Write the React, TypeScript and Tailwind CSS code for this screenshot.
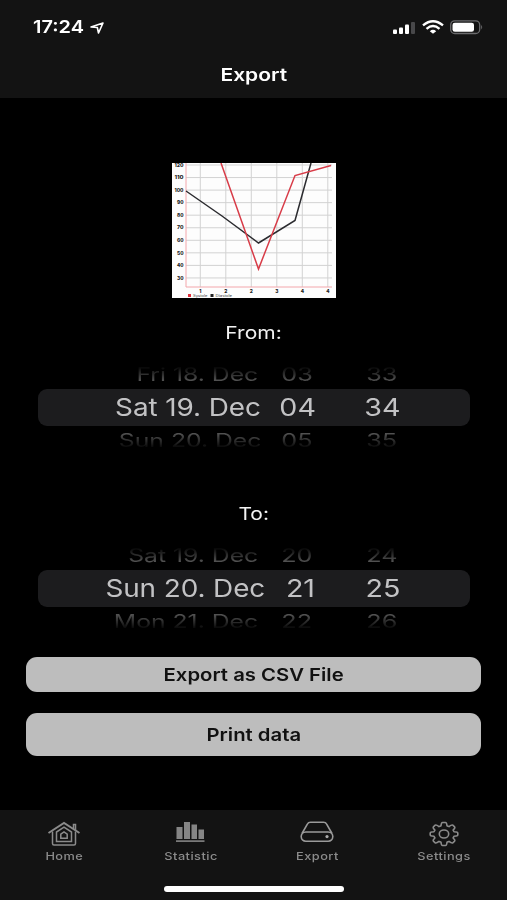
type Row = {
  date: string;
  hour: string;
  minute: string;
};

type WheelProps = {
  label: string;
  before: Row;
  selected: Row;
  after: Row;
  dateWidth: string;
  hourWidth: string;
  afterShift: string;
};

const X_LABELS = ["1", "2", "2", "3", "4", "4"];
const Y_LABELS = ["120", "110", "100", "90", "80", "70", "60", "50", "40", "30"];

function StatusIcons() {
  return (
    <svg width="94" height="18" viewBox="0 0 94 18" aria-hidden>
      <g fill="#fff">
        <rect x="2" y="11.5" width="4" height="4.5" rx="1" />
        <rect x="8" y="9.5" width="4" height="6.5" rx="1" />
        <rect x="14" y="6.5" width="4" height="9.5" rx="1" />
        <rect x="20" y="4" width="4" height="12" rx="1" fill="#48484a" />
      </g>
      <g fill="none" stroke="#fff" strokeWidth="2.4">
        <path d="M32 7.3 Q42 -1 52 7.3" />
        <path d="M35.5 10.8 Q42 5.4 48.5 10.8" />
      </g>
      <path d="M38.8 13.2 Q42 10.5 45.2 13.2 L42 15.8 Z" fill="#fff" />
      <rect x="59.7" y="2.9" width="29" height="12.6" rx="4" fill="none" stroke="#6b6b6d" strokeWidth="1.3" />
      <rect x="61.5" y="4.7" width="21.5" height="9" rx="2.3" fill="#fff" />
      <path d="M90.2 7 Q92.2 9.2 90.2 11.4 Z" fill="#6b6b6d" />
    </svg>
  );
}

function Chart() {
  return (
    <svg width="164" height="135" viewBox="0 0 164 135" className="block bg-[#fdfdfd]" aria-hidden>
      <g stroke="#d2d2d2" strokeWidth="1">
        {Y_LABELS.map((label, i) => (
          <path key={label} d={`M14 ${2 + i * 12.55}H160`} />
        ))}
        {X_LABELS.map((_, i) => (
          <path key={i} d={`M${28.3 + i * 25.5} 0V124`} />
        ))}
      </g>
      <path d="M14 0V124H160" fill="none" stroke="#f3a6ab" strokeWidth="1" />
      <g fill="#222" fontSize="4.8" fontWeight="800" fontFamily="Inter, sans-serif">
        {Y_LABELS.map((label, i) => (
          <text
            key={label}
            x="11.5"
            y={3.7 + i * 12.55}
            textAnchor="end"
            textLength={label.length === 3 ? 9 : 6.5}
            lengthAdjust="spacingAndGlyphs"
          >
            {label}
          </text>
        ))}
        {X_LABELS.map((label, i) => (
          <text key={i} x={28.3 + i * 25.5} y="130" textAnchor="middle">
            {label}
          </text>
        ))}
      </g>
      <path d="M14 28 L50 53 L86.5 80 L123 57.5 L139 0" fill="none" stroke="#2b2b2f" strokeWidth="1.5" />
      <path d="M49 0 L86.5 106 L123 12.5 L159 2.5" fill="none" stroke="#d83c48" strokeWidth="1.5" />
      <rect x="16" y="131" width="3" height="3" fill="#e0303c" />
      <rect x="38.5" y="131" width="3" height="3" fill="#222" />
      <g fill="#444" fontSize="3.6" fontFamily="Inter, sans-serif">
        <text x="21" y="134" textLength="14.5" lengthAdjust="spacingAndGlyphs">Systole</text>
        <text x="43.5" y="134" textLength="16.5" lengthAdjust="spacingAndGlyphs">Diastole</text>
      </g>
    </svg>
  );
}

function Wheel({ label, before, selected, after, dateWidth, hourWidth, afterShift }: WheelProps) {
  return (
    <section className="flex flex-col items-center">
      <h2 className="h-6 scale-x-[1.2] text-[17.5px] leading-6 text-[#f2f2f2]">{label}</h2>
      <div className="mt-[21px] flex w-[432px] flex-col whitespace-nowrap">
        <div className="flex h-[23px] items-start pt-px text-[#545454] [mask-image:linear-gradient(to_bottom,transparent_0px,black_15px)]">
          <div className="w-[221px] text-right">
            <span className="inline-block origin-top-right scale-x-[1.03] scale-y-[.76] text-[24px] leading-[21px]">{before.date}</span>
          </div>
          <div className="w-[76px] text-center">
            <span className="inline-block origin-top scale-x-[1.05] scale-y-[.76] text-[24px] leading-[21px]">{before.hour}</span>
          </div>
          <div className="w-[94px] text-center">
            <span className="inline-block origin-top scale-x-[1.05] scale-y-[.76] text-[24px] leading-[21px]">{before.minute}</span>
          </div>
        </div>
        <div className="flex h-[37px] items-center rounded-[9px] bg-[#1c1c1e] pb-px text-[#c2c2c4]">
          <div className={`text-right ${dateWidth}`}>
            <span className="inline-block origin-right scale-x-[1.14] text-[24.5px] leading-9 tracking-[-.1px]">{selected.date}</span>
          </div>
          <div className={`text-center ${hourWidth}`}>
            <span className="inline-block scale-x-[1.17] text-[24.5px] leading-9">{selected.hour}</span>
          </div>
          <div className="w-[94px] text-center">
            <span className="inline-block scale-x-[1.17] text-[24.5px] leading-9">{selected.minute}</span>
          </div>
        </div>
        <div className="flex h-[23px] items-start pt-[7px] text-[#545454] [mask-image:linear-gradient(to_top,transparent_0px,black_16px)]">
          <div className="w-[221px] text-right">
            <span className={`inline-block origin-top-right scale-x-[1.03] scale-y-[.76] text-[24px] leading-[21px] ${afterShift}`}>{after.date}</span>
          </div>
          <div className="w-[76px] text-center">
            <span className="inline-block origin-top scale-x-[1.05] scale-y-[.76] text-[24px] leading-[21px]">{after.hour}</span>
          </div>
          <div className="w-[94px] text-center">
            <span className="inline-block origin-top scale-x-[1.05] scale-y-[.76] text-[24px] leading-[21px]">{after.minute}</span>
          </div>
        </div>
      </div>
    </section>
  );
}

function HomeIcon() {
  return (
    <svg width="34" height="26" viewBox="0 0 34 26" fill="none" stroke="#8b8b8b" strokeWidth="1.5" aria-hidden>
      <path d="M1.5 12 L17 2 L32.5 12" strokeWidth="1.9" />
      <path d="M26.5 8V3.5H28.5V9" />
      <path d="M5.5 10.5V22.5Q5.5 24 7 24H27Q28.5 24 28.5 22.5V10.5" />
      <path d="M9.5 20.5V11L17 6.2L24.5 11V20.5Z" />
      <path d="M13.8 17.2V13.2L17 11L20.2 13.2V17.2Z" />
    </svg>
  );
}

function StatisticIcon() {
  return (
    <svg width="32" height="26" viewBox="0 0 32 26" fill="#858585" aria-hidden>
      <rect x="1.5" y="6" width="6" height="12" />
      <rect x="9" y="1" width="6" height="17" />
      <rect x="16.5" y="3.5" width="5.5" height="14.5" />
      <rect x="23.5" y="8.5" width="5.5" height="9.5" />
      <rect x="1" y="19.3" width="28.5" height="1.6" />
    </svg>
  );
}

function ExportIcon() {
  return (
    <svg width="34" height="26" viewBox="0 0 34 26" fill="none" stroke="#9a9a9a" strokeWidth="1.6" aria-hidden>
      <path d="M2 12.5 L7.5 2.8Q8.3 1.2 10.5 1.2H23.5Q25.7 1.2 26.5 2.8L32 12.5" />
      <rect x="1.2" y="11" width="31.6" height="9.2" rx="4.6" />
      <circle cx="27" cy="15.6" r="1.6" fill="#aaa" stroke="none" />
    </svg>
  );
}

function SettingsIcon() {
  return (
    <svg width="30" height="26" viewBox="0 0 30 26" fill="none" stroke="#8b8b8b" strokeWidth="1.6" strokeLinejoin="round" aria-hidden>
      <path d="M12 4.8Q12.3 1.5 13.5 1.5H16.5Q17.7 1.5 18 4.8Q19 5.3 20 5.6Q22.8 3.4 23.8 4.2L25.6 5.8Q26.5 6.7 24.1 9Q24.6 9.9 25 10.8Q28.8 11 28.8 12V14Q28.8 15 25 15.2Q24.6 16.1 24.1 17Q26.5 19.3 25.6 20.2L23.8 21.8Q22.8 22.6 20 20.4Q19 20.7 18 21.2Q17.7 24.5 16.5 24.5H13.5Q12.3 24.5 12 21.2Q11 20.7 10 20.4Q7.2 22.6 6.2 21.8L4.4 20.2Q3.5 19.3 5.9 17Q5.4 16.1 5 15.2Q1.2 15 1.2 14V12Q1.2 11 5 10.8Q5.4 9.9 5.9 9Q3.5 6.7 4.4 5.8L6.2 4.2Q7.2 3.4 10 5.6Q11 5.3 12 4.8Z" />
      <ellipse cx="15" cy="13" rx="4.7" ry="4" />
    </svg>
  );
}

const TABS = [
  { label: "Home", icon: <HomeIcon /> },
  { label: "Statistic", icon: <StatisticIcon /> },
  { label: "Export", icon: <ExportIcon /> },
  { label: "Settings", icon: <SettingsIcon /> },
];

export default function App() {
  return (
    <div className="flex h-[900px] w-[507px] flex-col overflow-hidden bg-black font-[Inter,sans-serif]">
      <header className="h-[98px] bg-[#131313] text-white">
        <div className="flex h-[54px] items-center justify-between pr-[22px] pl-[33px]">
          <div className="flex items-center pt-px">
            <span className="w-[57px] origin-left scale-x-[1.14] text-[17.5px] font-semibold">17:24</span>
            <svg width="14" height="12" viewBox="0 0 14 12" fill="none" stroke="#fff" strokeWidth="1.6" strokeLinejoin="round" aria-hidden>
              <path d="M1 5 L13 1 L8.5 11 L7.3 5.5Z" />
            </svg>
          </div>
          <StatusIcons />
        </div>
        <h1 className="flex h-[42px] items-center justify-center">
          <span className="scale-x-[1.2] text-[17.5px] font-semibold">Export</span>
        </h1>
      </header>

      <main className="flex flex-1 flex-col items-center pt-[65px]">
        <Chart />
        <div className="mt-[23px]">
          <Wheel
            label="From:"
            before={{ date: "Fri 18. Dec", hour: "03", minute: "33" }}
            selected={{ date: "Sat 19. Dec", hour: "04", minute: "34" }}
            after={{ date: "Sun 20. Dec", hour: "05", minute: "35" }}
            dateWidth="w-[223px]"
            hourWidth="w-[75px]"
            afterShift="translate-x-[3px]"
          />
        </div>
        <div className="mt-[53px]">
          <Wheel
            label="To:"
            before={{ date: "Sat 19. Dec", hour: "20", minute: "24" }}
            selected={{ date: "Sun 20. Dec", hour: "21", minute: "25" }}
            after={{ date: "Mon 21. Dec", hour: "22", minute: "26" }}
            dateWidth="w-[228px]"
            hourWidth="w-[70px]"
            afterShift="translate-x-0"
          />
        </div>
        <div className="mt-[27px] flex w-[455px] flex-col gap-[21px] text-[17.5px] font-semibold text-[#111]">
          <button className="h-[35px] rounded-[11px] bg-[#bdbdbd] pt-[2px]">
            <span className="inline-block scale-x-[1.16]">Export as CSV File</span>
          </button>
          <button className="h-[43px] rounded-[11px] bg-[#bdbdbd] pt-[2px]">
            <span className="inline-block scale-x-[1.16]">Print data</span>
          </button>
        </div>
      </main>

      <nav className="flex h-[90px] flex-col items-center bg-[#131313]">
        <div className="grid h-[76px] w-full grid-cols-4 pt-[11px] pl-px">
          {TABS.map((tab) => (
            <div key={tab.label} className="flex flex-col items-center text-[#8b8b8b]">
              {tab.icon}
              <span className="mt-px scale-x-[1.16] text-[11px] leading-4 font-medium tracking-[.4px]">{tab.label}</span>
            </div>
          ))}
        </div>
        <div className="h-[6px] w-[180px] rounded-full bg-white" />
      </nav>
    </div>
  );
}
